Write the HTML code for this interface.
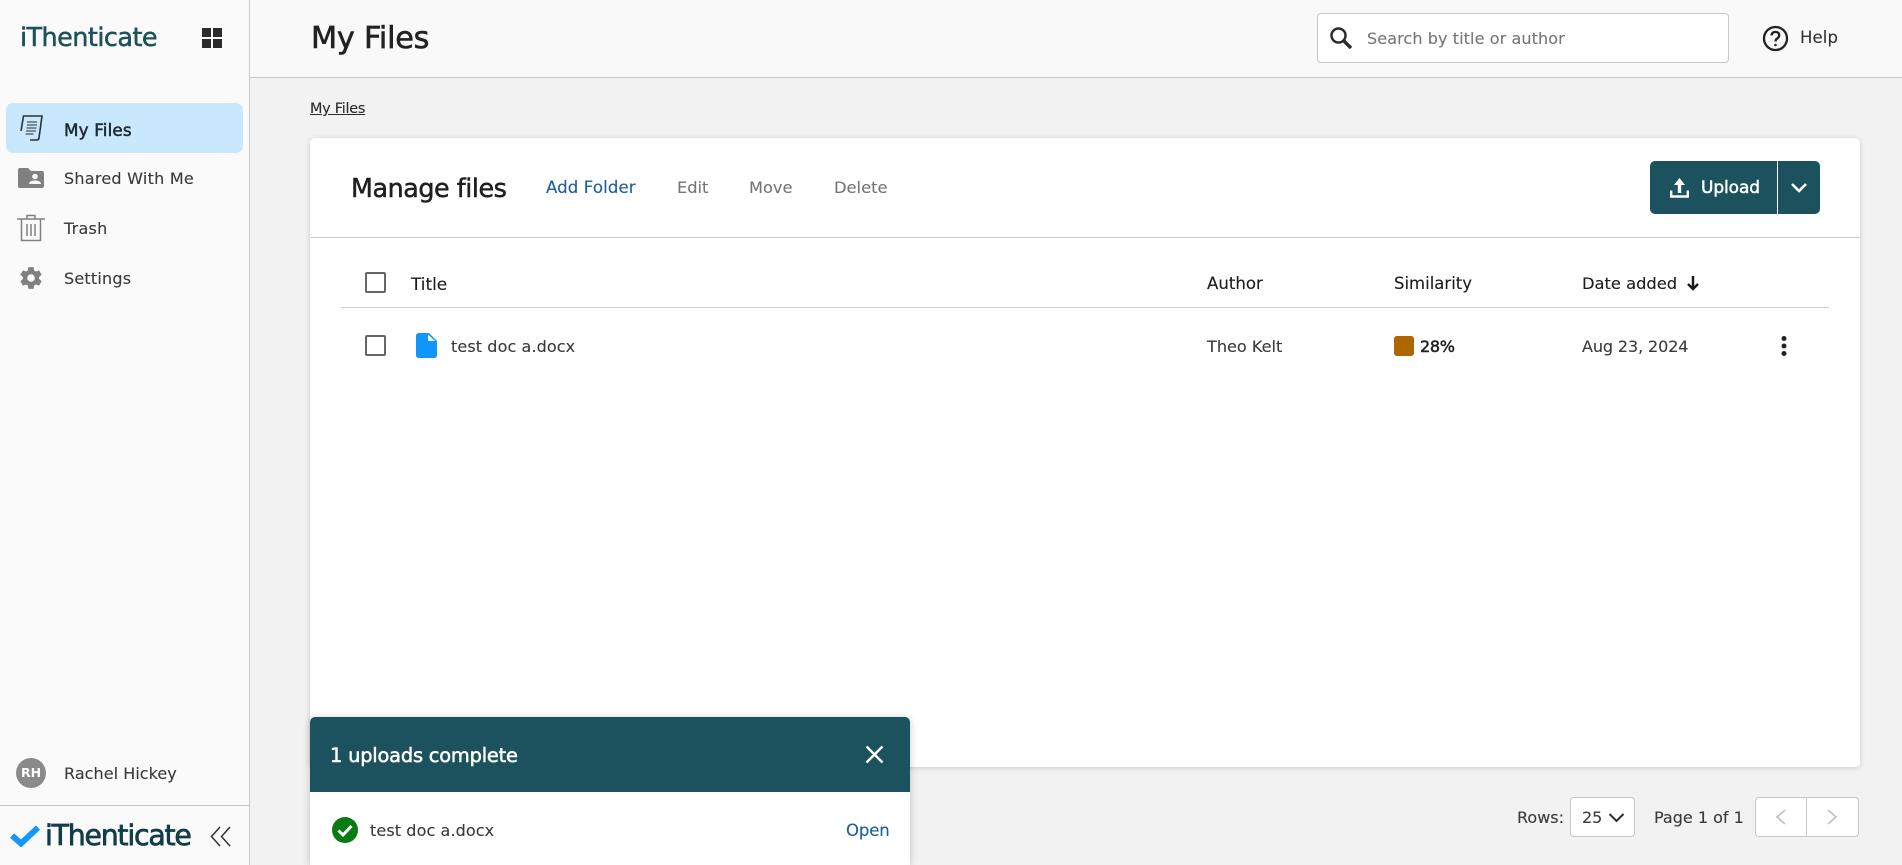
<!DOCTYPE html>
<html lang="en"><head><meta charset="utf-8"><title>iThenticate - My Files</title>
<style>
html,body{margin:0;padding:0;width:1902px;height:865px;overflow:hidden;background:#f2f2f2}
body{position:relative;font-family:"DejaVu Sans","Liberation Sans",sans-serif;color:#2b2b2b}
.a,.t,svg{position:absolute}
.t{white-space:nowrap;line-height:24px;font-size:16px;-webkit-text-stroke:.12px currentColor}
.t.m{-webkit-text-stroke:.5px currentColor}
.grey{color:#767676}
.blue{color:#1b5e9a}
.teal{background:#1c525e}
</style></head><body>
<!-- Sidebar -->
<div class="a" style="left:0;top:0;width:249px;height:865px;background:#fafafa;border-right:1px solid #c8c8c8"></div>
<div class="t m" style="left:20px;top:25px;line-height:26px;font-size:25.500px;letter-spacing:-.55px;color:#1c515d">iThenticate</div>
<svg style="left:202px;top:28px" width="20" height="20" viewBox="0 0 20 20"><path fill="#2b2b2b" d="M0 0h9v9H0zM11 0h9v9h-9zM0 11h9v9H0zM11 11h9v9h-9z"/></svg>
<div class="a" style="left:6px;top:103px;width:237px;height:50px;background:#c9e8fd;border-radius:7px"></div>
<svg style="left:19px;top:114px" width="25" height="28" viewBox="0 0 25 28" fill="none" stroke="#2a3138"><path stroke-width="1.6" d="M2 17 4.500 2H23l-3 22q-.5 2-2.500 2H11"/><path stroke="#5f6b75" stroke-width="1.500" d="M8 8h10M8 11h10M7.500 14h10M7 17h10M6.500 20h8"/></svg>
<div class="t m" style="left:64px;top:118px;font-size:16.800px;letter-spacing:.15px;color:#222a33">My Files</div>
<svg style="left:18px;top:168px" width="26" height="20" viewBox="0 0 26 20"><path fill="#808080" d="M2 0h8l3 3h11q2 0 2 2v13q0 2-2 2H2q-2 0-2-2V2q0-2 2-2z"/><circle cx="17" cy="8.500" r="2.800" fill="#fafafa"/><path fill="#fafafa" d="M11 16q0-3.500 6-3.500t6 3.500z"/></svg>
<div class="t" style="left:64px;top:167px;letter-spacing:.25px;color:#3a3a3a">Shared With Me</div>
<svg style="left:17px;top:214px" width="28" height="28" viewBox="0 0 28 28" fill="none" stroke="#808080" stroke-width="1.500"><path d="M0 5h28M10 5V1.500h8V5M4.500 5v21.500h19V5M10 10v12M14 10v12M18 10v12"/></svg>
<div class="t" style="left:64px;top:217px;letter-spacing:.25px;color:#3a3a3a">Trash</div>
<svg style="left:18px;top:265px" width="26" height="26" viewBox="0 0 24 24"><path fill="#808080" d="M19.430 12.980c.04-.32.07-.64.07-.98s-.03-.66-.07-.98l2.110-1.650a.5.5 0 0 0 .12-.64l-2-3.460a.5.5 0 0 0-.61-.22l-2.490 1a7.300 7.300 0 0 0-1.690-.98l-.38-2.650A.49.49 0 0 0 14 2h-4a.49.49 0 0 0-.49.42l-.38 2.650c-.61.25-1.170.59-1.690.98l-2.490-1a.5.5 0 0 0-.61.22l-2 3.460a.49.49 0 0 0 .12.64l2.110 1.650c-.04.32-.07.65-.07.98s.03.66.07.98l-2.110 1.650a.5.5 0 0 0-.12.64l2 3.460c.12.22.39.3.61.22l2.490-1c.52.4 1.080.73 1.690.98l.38 2.650c.03.24.24.42.49.42h4c.25 0 .46-.18.49-.42l.38-2.650c.61-.25 1.170-.59 1.690-.98l2.490 1c.23.09.49 0 .61-.22l2-3.460a.5.5 0 0 0-.12-.64zM12 15.500a3.500 3.500 0 1 1 0-7 3.500 3.500 0 0 1 0 7z"/></svg>
<div class="t" style="left:64px;top:267px;letter-spacing:.2px;color:#3a3a3a">Settings</div>
<div class="a" style="left:16px;top:758px;width:30px;height:30px;border-radius:50%;background:#8a8a8a;color:#fff;font-size:12.500px;font-weight:700;line-height:30px;text-align:center">RH</div>
<div class="t" style="left:64px;top:762px;letter-spacing:.05px;color:#3a3a3a">Rachel Hickey</div>
<div class="a" style="left:0;top:805px;width:249px;height:1px;background:#c8c8c8"></div>
<svg style="left:10px;top:825px" width="30" height="22" viewBox="0 0 30 22"><path fill="none" stroke="#1496ff" stroke-width="6" d="M2 10.500 11 18.500 28 2.500"/></svg>
<div class="t m" style="left:45px;top:821px;line-height:30px;font-size:28.400px;letter-spacing:-1.250px;color:#0f3d49;-webkit-text-stroke:.7px #0f3d49">iThenticate</div>
<svg style="left:210px;top:826px" width="21" height="21" viewBox="0 0 21 21" fill="none" stroke="#333" stroke-width="1.500"><path d="M10 1 1.500 10.500l8.500 9.500M20 1l-8.500 9.500 8.500 9.500"/></svg>
<!-- Header -->
<div class="a" style="left:250px;top:0;width:1652px;height:77px;background:#f9f9f9;border-bottom:1px solid #c8c8c8"></div>
<div class="t m" style="left:311px;top:21px;line-height:36px;font-size:30.300px;letter-spacing:-.25px;color:#222;-webkit-text-stroke:.6px #222">My Files</div>
<div class="a" style="left:1317px;top:13px;width:410px;height:48px;background:#fff;border:1px solid #c8c8c8;border-radius:4px"></div>
<svg style="left:1329px;top:26px" width="24" height="24" viewBox="0 0 24 24" fill="none" stroke="#2b2b2b" stroke-width="2.500"><circle cx="9.500" cy="9.500" r="7"/><path stroke-width="3.400" d="m14.500 14.500 7.500 7.500"/></svg>
<div class="t" style="left:1367px;top:27px;letter-spacing:.1px;color:#767676">Search by title or author</div>
<svg style="left:1762px;top:25px" width="27" height="27" viewBox="0 0 27 27" fill="none" stroke="#222" stroke-width="2.300"><circle cx="13.500" cy="13.500" r="11.500"/><path d="M9.500 10.500q.2-3.500 4-3.500 3.700 0 3.700 3.300 0 2-2 3.200-1.700 1-1.700 3"/><circle cx="13.500" cy="20" r=".5" stroke-width="1.600" fill="#222"/></svg>
<div class="t" style="left:1800px;top:26px;font-size:16.500px;letter-spacing:.1px;color:#333">Help</div>
<div class="t" style="left:310px;top:97px;font-size:14.400px;letter-spacing:-.25px;text-decoration:underline;color:#2b2b2b">My Files</div>
<!-- Card -->
<div class="a" style="left:310px;top:138px;width:1550px;height:629px;background:#fff;border-radius:5px;box-shadow:0 1px 6px rgba(0,0,0,.16)"></div>
<div class="t m" style="left:351px;top:173px;line-height:30px;font-size:25.400px;letter-spacing:-.45px;color:#1f1f1f">Manage files</div>
<div class="t blue" style="left:546px;top:176px;font-size:16.600px;letter-spacing:.1px">Add Folder</div>
<div class="t grey" style="left:677px;top:176px;font-size:16.200px">Edit</div>
<div class="t grey" style="left:749px;top:176px;font-size:16.200px">Move</div>
<div class="t grey" style="left:834px;top:176px;font-size:16.300px">Delete</div>
<div class="a teal" style="left:1650px;top:161px;width:170px;height:53px;border-radius:5px"></div>
<div class="a" style="left:1777px;top:161px;width:1px;height:53px;background:#fff"></div>
<svg style="left:1670px;top:178px" width="19" height="20" viewBox="0 0 19 20"><path fill="none" stroke="#fff" stroke-width="2.400" d="M1.200 12.500v6h16.600v-6"/><path fill="#fff" d="M9.500 0 15 7h-3.800v8H7.800V7H4z"/></svg>
<div class="t m" style="left:1701px;top:176px;font-size:17px;letter-spacing:-.1px;color:#fff">Upload</div>
<svg style="left:1790px;top:182px" width="18" height="12" viewBox="0 0 18 12" fill="none" stroke="#fff" stroke-width="2.600"><path d="m2 2 7 7 7-7"/></svg>
<div class="a" style="left:310px;top:237px;width:1550px;height:1px;background:#cfcfcf"></div>
<!-- Table -->
<div class="a" style="left:365px;top:272px;width:17px;height:17px;border:2.500px solid #666;border-radius:2px"></div>
<div class="t" style="left:411px;top:272px;font-size:16.900px;color:#1c1c1c">Title</div>
<div class="t" style="left:1207px;top:272px;font-size:16.600px;color:#1c1c1c">Author</div>
<div class="t" style="left:1394px;top:272px;font-size:16.500px;color:#1c1c1c">Similarity</div>
<div class="t" style="left:1582px;top:272px;font-size:16.300px;color:#1c1c1c">Date added</div>
<svg style="left:1686px;top:275px" width="14" height="16" viewBox="0 0 14 16" fill="none" stroke="#1c1c1c" stroke-width="2.500"><path d="M7 1v13M2 9l5 5 5-5"/></svg>
<div class="a" style="left:341px;top:307px;width:1488px;height:1px;background:#cfcfcf"></div>
<div class="a" style="left:365px;top:335px;width:17px;height:17px;border:2.500px solid #666;border-radius:2px"></div>
<svg style="left:416px;top:333px" width="21" height="25" viewBox="0 0 21 25"><path fill="#0f95fb" d="M3 0h10l8 8v14q0 3-3 3H3q-3 0-3-3V3q0-3 3-3z"/><path fill="#fff" d="M12 1.500v6.500h7z"/></svg>
<div class="t" style="left:451px;top:335px;letter-spacing:.1px;color:#3a3a3a">test doc a.docx</div>
<div class="t" style="left:1207px;top:335px;font-size:16.100px;color:#3a3a3a">Theo Kelt</div>
<div class="a" style="left:1394px;top:336px;width:20px;height:20px;background:#b06500;border-radius:3px"></div>
<div class="t m" style="left:1420px;top:335px;letter-spacing:-.3px;font-size:16px;color:#222">28%</div>
<div class="t" style="left:1582px;top:335px;letter-spacing:-.1px;color:#3a3a3a">Aug 23, 2024</div>
<svg style="left:1780px;top:335px" width="8" height="22" viewBox="0 0 8 22" fill="#222"><circle cx="4" cy="3.500" r="2.500"/><circle cx="4" cy="11" r="2.500"/><circle cx="4" cy="18.500" r="2.500"/></svg>
<!-- Pagination -->
<div class="t" style="left:1517px;top:806px;color:#3a3a3a">Rows:</div>
<div class="a" style="left:1570px;top:797px;width:63px;height:38px;background:#fff;border:1px solid #c8c8c8;border-radius:4px"></div>
<div class="t" style="left:1582px;top:806px;color:#3a3a3a">25</div>
<svg style="left:1608px;top:812px" width="17" height="11" viewBox="0 0 17 11" fill="none" stroke="#2b2b2b" stroke-width="2"><path d="m1.500 2 7 7 7-7"/></svg>
<div class="t" style="left:1654px;top:806px;color:#3a3a3a">Page 1 of 1</div>
<div class="a" style="left:1755px;top:797px;width:102px;height:38px;background:#fff;border:1px solid #c8c8c8;border-radius:4px"></div>
<div class="a" style="left:1806px;top:798px;width:1px;height:38px;background:#c8c8c8"></div>
<svg style="left:1775px;top:808px" width="12" height="18" viewBox="0 0 12 18" fill="none" stroke="#c4c4c4" stroke-width="1.800"><path d="M10 2 2 9l8 7"/></svg>
<svg style="left:1826px;top:808px" width="12" height="18" viewBox="0 0 12 18" fill="none" stroke="#c4c4c4" stroke-width="1.800"><path d="m2 2 8 7-8 7"/></svg>
<!-- Toast -->
<div class="a" style="left:310px;top:717px;width:600px;height:148px;background:#fff;border-radius:5px 5px 0 0;box-shadow:0 1px 8px rgba(0,0,0,.22)"></div>
<div class="a teal" style="left:310px;top:717px;width:600px;height:75px;border-radius:5px 5px 0 0"></div>
<div class="t m" style="left:330px;top:743px;line-height:26px;font-size:19.400px;letter-spacing:-.2px;color:#fff">1 uploads complete</div>
<svg style="left:865px;top:745px" width="19" height="19" viewBox="0 0 19 19" fill="none" stroke="#fff" stroke-width="2.400"><path d="m1.500 1.500 16 16M17.500 1.500l-16 16"/></svg>
<svg style="left:332px;top:817px" width="26" height="26" viewBox="0 0 26 26"><circle cx="13" cy="13" r="13" fill="#0a7a14"/><path fill="none" stroke="#fff" stroke-width="3" d="m6.500 13.500 4.500 4.500 8.500-9"/></svg>
<div class="t" style="left:370px;top:819px;letter-spacing:.1px;color:#3a3a3a">test doc a.docx</div>
<div class="t blue" style="left:846px;top:819px;font-size:16.500px;letter-spacing:-.1px">Open</div>
</body></html>
